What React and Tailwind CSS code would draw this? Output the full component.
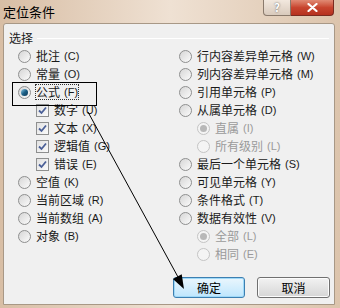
const cjk = { fontFamily: '"Noto Sans CJK SC", "Liberation Sans", sans-serif' };

const Radio = ({ checked, disabled }) => (
  <span
    className={`relative inline-flex h-[13px] w-[13px] shrink-0 items-center justify-center rounded-full border ${
      disabled ? "border-[#c4c4c4] bg-[#f4f4f4]" : "border-[#8e8f8f] bg-gradient-to-br from-[#d6d6d6] to-[#fbfbfb]"
    }`}
  >
    {checked && (
      <span
        className={`h-[7px] w-[7px] rounded-full ${
          disabled ? "bg-[#b8b8b8]" : "bg-gradient-to-br from-[#8fd0ea] via-[#1b5f86] to-[#0f3a58]"
        }`}
      />
    )}
  </span>
);

const Check = () => (
  <span className="inline-flex h-[13px] w-[13px] shrink-0 items-center justify-center border border-[#8e8f8f] bg-gradient-to-br from-[#e2e2e2] to-[#fafafa]">
    <svg width="9" height="9" viewBox="0 0 9 9">
      <path d="M1 4.5 L3.5 7 L8 1.5" fill="none" stroke="#4a5f97" strokeWidth="1.8" />
    </svg>
  </span>
);

const Key = ({ k }) => (
  <span className="ml-[4px] text-[11px]" style={{ fontFamily: '"Liberation Sans", sans-serif' }}>
    ({k})
  </span>
);

const Option = ({ label, k, type = "radio", checked, disabled, indent, focus }) => (
  <div className={`flex h-[18px] items-center gap-[5px] ${indent ? "pl-[18px]" : ""}`}>
    {type === "radio" ? <Radio checked={checked} disabled={disabled} /> : <Check />}
    <span
      className={`flex items-center leading-[14px] ${disabled ? "text-[#9a9a9a]" : "text-[#1a1a1a]"} ${
        focus ? "outline outline-1 outline-dotted outline-[#333]" : ""
      }`}
    >
      {label}
      <Key k={k} />
    </span>
  </div>
);

export default function App() {
  return (
    <div
      className="relative flex h-[308px] w-[340px] flex-col overflow-hidden bg-gradient-to-r from-[#d8bea5] via-[#efe1d3] to-[#dcc4ac] text-[12px]"
      style={cjk}
    >
      <div className="flex h-[23px] shrink-0 items-start justify-between">
        <span className="mt-[2px] pl-[3px] text-[13px] text-black">定位条件</span>
        <div className="mr-[6px] flex h-[16px]">
          <div className="flex w-[28px] items-center justify-center rounded-bl-[4px] border border-t-0 border-[#8a7a6c] bg-gradient-to-b from-[#f2e8de] to-[#d9cabc] text-[11px] font-bold leading-none text-white [text-shadow:0_0_2px_#555]">
            ?
          </div>
          <div className="flex w-[43px] items-center justify-center rounded-br-[4px] border border-l-0 border-t-0 border-[#7a2b20] bg-gradient-to-b from-[#e08a74] via-[#c8452f] to-[#b5311f]">
            <svg width="11" height="9" viewBox="0 0 11 9">
              <path d="M1.5 1 L9.5 8 M9.5 1 L1.5 8" stroke="#fff" strokeWidth="2.2" strokeLinecap="round" />
            </svg>
          </div>
        </div>
      </div>

      <div className="mb-[3px] ml-[3px] mr-[5px] flex flex-1 flex-col rounded-t-[3px] border border-[#a89886] bg-[#f0f0f0] pt-[5px]">
        <div className="flex h-[18px] items-center pl-[5px] pr-[5px]">
          <span className="text-[#1a1a1a]">选择</span>
          <div className="ml-[4px] h-px flex-1 border-b border-white bg-[#d5dfe5]" />
        </div>

        <div className="grid grid-cols-[161px_1fr] pl-[14px]">
          <div className="flex flex-col">
            <Option label="批注" k="C" />
            <Option label="常量" k="O" />
            <Option label="公式" k="F" checked focus />
            <Option label="数字" k="U" type="check" indent />
            <Option label="文本" k="X" type="check" indent />
            <Option label="逻辑值" k="G" type="check" indent />
            <Option label="错误" k="E" type="check" indent />
            <Option label="空值" k="K" />
            <Option label="当前区域" k="R" />
            <Option label="当前数组" k="A" />
            <Option label="对象" k="B" />
          </div>
          <div className="flex flex-col">
            <Option label="行内容差异单元格" k="W" />
            <Option label="列内容差异单元格" k="M" />
            <Option label="引用单元格" k="P" />
            <Option label="从属单元格" k="D" />
            <Option label="直属" k="I" checked disabled indent />
            <Option label="所有级别" k="L" disabled indent />
            <Option label="最后一个单元格" k="S" />
            <Option label="可见单元格" k="Y" />
            <Option label="条件格式" k="T" />
            <Option label="数据有效性" k="V" />
            <Option label="全部" k="L" checked disabled indent />
            <Option label="相同" k="E" disabled indent />
          </div>
        </div>

        <div className="flex flex-1 items-end justify-end gap-[12px] pb-[6px] pr-[4px]">
          <button className="h-[21px] w-[72px] rounded-[3px] border border-[#3c7fb1] bg-gradient-to-b from-[#eaf6fd] to-[#bee6fd] text-[12px] text-black shadow-[inset_0_0_0_1px_#9fd9f8]">
            确定
          </button>
          <button className="h-[21px] w-[73px] rounded-[3px] border border-[#707070] bg-gradient-to-b from-[#f2f2f2] to-[#d6d6d6] text-[12px] text-black shadow-[inset_0_0_0_1px_#fcfcfc]">
            取消
          </button>
        </div>
      </div>

      <div className="pointer-events-none absolute left-[12px] top-[82px] h-[24px] w-[85px] border border-black" />
      <svg className="pointer-events-none absolute left-0 top-0" width="340" height="308">
        <line x1="88" y1="112" x2="178" y2="277" stroke="#000" strokeWidth="1" />
        <polygon points="184,289 172.9,279.1 181.7,274.3" fill="#000" />
      </svg>
    </div>
  );
}
